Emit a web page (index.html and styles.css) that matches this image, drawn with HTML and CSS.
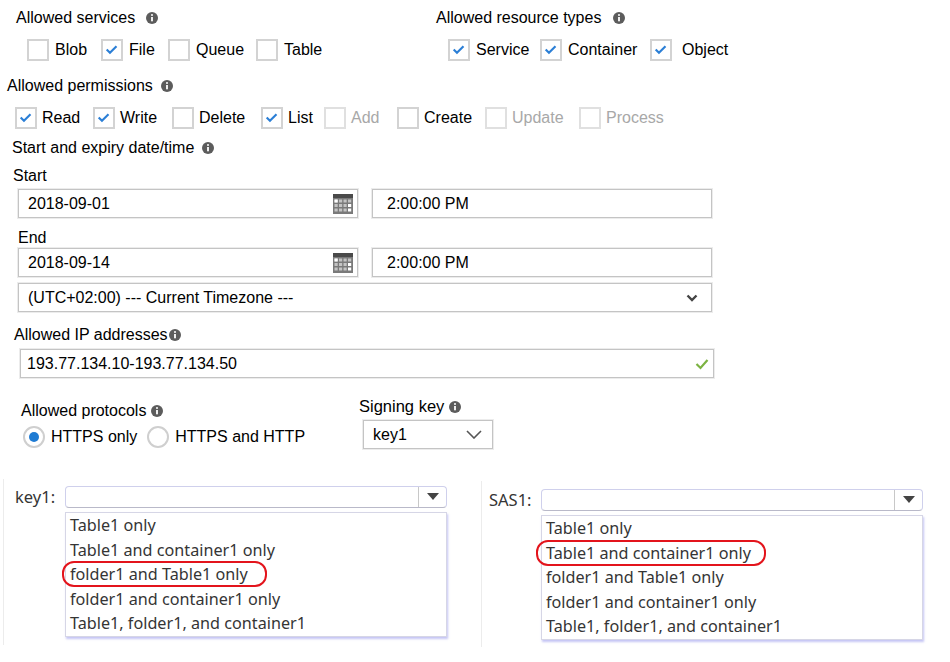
FILE: index.html
```html
<!DOCTYPE html>
<html>
<head>
<meta charset="utf-8">
<link rel="stylesheet" href="styles.css">
</head>
<body>
<div class="page">
  <div class="top">
    <div class="col services">
      <div class="h h16">Allowed services <svg class="info g11" viewBox="0 0 12 12"><circle cx="6" cy="6" r="6" fill="#5c5c5c"/><rect x="5.1" y="5" width="1.8" height="4.3" fill="#fff"/><circle cx="6" cy="3.1" r="1" fill="#fff"/></svg></div>
      <div class="cbrow svc-grid">
        <label class="cb"><span class="box"></span>Blob</label>
        <label class="cb"><span class="box"><svg viewBox="0 0 22 22"><path d="M4.5 10.5 L8.5 14.5 L16.5 6.5" fill="none" stroke="#2b7fd6" stroke-width="2.6"/></svg></span>File</label>
        <label class="cb"><span class="box"></span>Queue</label>
        <label class="cb"><span class="box"></span>Table</label>
      </div>
    </div>
    <div class="col types">
      <div class="h h16">Allowed resource types <svg class="info g12" viewBox="0 0 12 12"><circle cx="6" cy="6" r="6" fill="#5c5c5c"/><rect x="5.1" y="5" width="1.8" height="4.3" fill="#fff"/><circle cx="6" cy="3.1" r="1" fill="#fff"/></svg></div>
      <div class="cbrow typ-grid">
        <label class="cb"><span class="box"><svg viewBox="0 0 22 22"><path d="M4.5 10.5 L8.5 14.5 L16.5 6.5" fill="none" stroke="#2b7fd6" stroke-width="2.6"/></svg></span>Service</label>
        <label class="cb"><span class="box"><svg viewBox="0 0 22 22"><path d="M4.5 10.5 L8.5 14.5 L16.5 6.5" fill="none" stroke="#2b7fd6" stroke-width="2.6"/></svg></span>Container</label>
        <label class="cb obj"><span class="box"><svg viewBox="0 0 22 22"><path d="M4.5 10.5 L8.5 14.5 L16.5 6.5" fill="none" stroke="#2b7fd6" stroke-width="2.6"/></svg></span>Object</label>
      </div>
    </div>
  </div>

  <div class="perm">
    <div class="h h16 perm-h">Allowed permissions <svg class="info g8" viewBox="0 0 12 12"><circle cx="6" cy="6" r="6" fill="#5c5c5c"/><rect x="5.1" y="5" width="1.8" height="4.3" fill="#fff"/><circle cx="6" cy="3.1" r="1" fill="#fff"/></svg></div>
    <div class="cbrow perm-grid">
      <label class="cb"><span class="box"><svg viewBox="0 0 22 22"><path d="M4.5 10.5 L8.5 14.5 L16.5 6.5" fill="none" stroke="#2b7fd6" stroke-width="2.6"/></svg></span>Read</label>
      <label class="cb"><span class="box"><svg viewBox="0 0 22 22"><path d="M4.5 10.5 L8.5 14.5 L16.5 6.5" fill="none" stroke="#2b7fd6" stroke-width="2.6"/></svg></span>Write</label>
      <label class="cb"><span class="box"></span>Delete</label>
      <label class="cb"><span class="box"><svg viewBox="0 0 22 22"><path d="M4.5 10.5 L8.5 14.5 L16.5 6.5" fill="none" stroke="#2b7fd6" stroke-width="2.6"/></svg></span>List</label>
      <label class="cb dis"><span class="box"></span>Add</label>
      <label class="cb"><span class="box"></span>Create</label>
      <label class="cb dis"><span class="box"></span>Update</label>
      <label class="cb dis"><span class="box"></span>Process</label>
    </div>
  </div>

  <div class="h h16 dt-h">Start and expiry date/time <svg class="info g8" viewBox="0 0 12 12"><circle cx="6" cy="6" r="6" fill="#5c5c5c"/><rect x="5.1" y="5" width="1.8" height="4.3" fill="#fff"/><circle cx="6" cy="3.1" r="1" fill="#fff"/></svg></div>
  <div class="h h16 start-l">Start</div>
  <div class="inrow">
    <div class="field date"><span>2018-09-01</span><svg class="cal" viewBox="0 0 20 20"><rect x="0" y="0" width="20" height="20" fill="#7a7a7a"/><rect x="0" y="0" width="20" height="4" fill="#4a4a4a"/><g fill="#c4c4c4"><rect x="1.5" y="5.5" width="3.2" height="3"/><rect x="6" y="5.5" width="3.2" height="3"/><rect x="10.5" y="5.5" width="3.2" height="3"/><rect x="15" y="5.5" width="3.2" height="3"/><rect x="1.5" y="10" width="3.2" height="3"/><rect x="6" y="10" width="3.2" height="3"/><rect x="10.5" y="10" width="3.2" height="3"/><rect x="1.5" y="14.5" width="3.2" height="3"/><rect x="6" y="14.5" width="3.2" height="3"/><rect x="10.5" y="14.5" width="3.2" height="3"/></g><rect x="1.5" y="5.5" width="3.2" height="3" fill="#fff"/><rect x="15" y="10" width="3.2" height="3" fill="#fff"/><rect x="15" y="14.5" width="3.2" height="3" fill="#fff"/></svg></div>
    <div class="field time"><span>2:00:00 PM</span></div>
  </div>
  <div class="h h16 end-l">End</div>
  <div class="inrow end-row">
    <div class="field date"><span>2018-09-14</span><svg class="cal" viewBox="0 0 20 20"><rect x="0" y="0" width="20" height="20" fill="#7a7a7a"/><rect x="0" y="0" width="20" height="4" fill="#4a4a4a"/><g fill="#c4c4c4"><rect x="1.5" y="5.5" width="3.2" height="3"/><rect x="6" y="5.5" width="3.2" height="3"/><rect x="10.5" y="5.5" width="3.2" height="3"/><rect x="15" y="5.5" width="3.2" height="3"/><rect x="1.5" y="10" width="3.2" height="3"/><rect x="6" y="10" width="3.2" height="3"/><rect x="10.5" y="10" width="3.2" height="3"/><rect x="1.5" y="14.5" width="3.2" height="3"/><rect x="6" y="14.5" width="3.2" height="3"/><rect x="10.5" y="14.5" width="3.2" height="3"/></g><rect x="1.5" y="5.5" width="3.2" height="3" fill="#fff"/><rect x="15" y="10" width="3.2" height="3" fill="#fff"/><rect x="15" y="14.5" width="3.2" height="3" fill="#fff"/></svg></div>
    <div class="field time"><span>2:00:00 PM</span></div>
  </div>
  <div class="field tz"><span>(UTC+02:00) --- Current Timezone ---</span><svg class="chev" viewBox="0 0 12 8"><path d="M1.5 1.5 L6 6 L10.5 1.5" fill="none" stroke="#444" stroke-width="2.4"/></svg></div>

  <div class="h h16 ip-h">Allowed IP addresses<svg class="info tight" viewBox="0 0 12 12"><circle cx="6" cy="6" r="6" fill="#5c5c5c"/><rect x="5.1" y="5" width="1.8" height="4.3" fill="#fff"/><circle cx="6" cy="3.1" r="1" fill="#fff"/></svg></div>
  <div class="field ip"><span>193.77.134.10-193.77.134.50</span><svg class="ok" viewBox="0 0 14 12"><path d="M1.5 6 L5.5 10 L12.5 2" fill="none" stroke="#7cb342" stroke-width="2.2"/></svg></div>

  <div class="proto-sign">
    <div class="proto">
      <div class="h h16 proto-h">Allowed protocols <svg class="info" viewBox="0 0 12 12"><circle cx="6" cy="6" r="6" fill="#5c5c5c"/><rect x="5.1" y="5" width="1.8" height="4.3" fill="#fff"/><circle cx="6" cy="3.1" r="1" fill="#fff"/></svg></div>
      <div class="radios">
        <label class="rd"><span class="ring on"></span>HTTPS only</label>
        <label class="rd"><span class="ring"></span>HTTPS and HTTP</label>
      </div>
    </div>
    <div class="sign">
      <div class="h sign-h">Signing key <svg class="info" viewBox="0 0 12 12"><circle cx="6" cy="6" r="6" fill="#5c5c5c"/><rect x="5.1" y="5" width="1.8" height="4.3" fill="#fff"/><circle cx="6" cy="3.1" r="1" fill="#fff"/></svg></div>
      <div class="field keysel"><span>key1</span><svg class="chev2" viewBox="0 0 16 9"><path d="M1 1 L8 8 L15 1" fill="none" stroke="#555" stroke-width="1.6"/></svg></div>
    </div>
  </div>

  <div class="answers">
    <div class="panel left">
      <div class="combo-row">
        <span class="plabel">key1:</span>
        <div class="combo"><span class="combo-val"></span><span class="combo-btn"><svg viewBox="0 0 12 7"><path d="M0 0 L12 0 L6 7 Z" fill="#444"/></svg></span></div>
      </div>
      <div class="list">
        <div class="item">Table1 only</div>
        <div class="item">Table1 and container1 only</div>
        <div class="item"><span class="hl hl-l">folder1 and Table1 only</span></div>
        <div class="item">folder1 and container1 only</div>
        <div class="item">Table1, folder1, and container1</div>
      </div>
    </div>
    <div class="panel right">
      <div class="combo-row">
        <span class="plabel">SAS1:</span>
        <div class="combo"><span class="combo-val"></span><span class="combo-btn"><svg viewBox="0 0 12 7"><path d="M0 0 L12 0 L6 7 Z" fill="#444"/></svg></span></div>
      </div>
      <div class="list">
        <div class="item">Table1 only</div>
        <div class="item"><span class="hl hl-r">Table1 and container1 only</span></div>
        <div class="item">folder1 and Table1 only</div>
        <div class="item">folder1 and container1 only</div>
        <div class="item">Table1, folder1, and container1</div>
      </div>
    </div>
  </div>
</div>
</body>
</html>
```

FILE: styles.css
```css
html, body {
  margin: 0;
  padding: 0;
  background: #fff;
}
body {
  font-family: "Liberation Sans", Arial, sans-serif;
  color: #000;
  width: 950px;
  height: 662px;
  overflow: hidden;
}
.h {
  display: flex;
  align-items: center;
  white-space: nowrap;
}
.h16 { font-size: 16px; }
.info {
  width: 12px;
  height: 12px;
  margin-left: 5px;
  flex: none;
}
.info.g8 { margin-left: 8px; }
.info.g11 { margin-left: 11px; }
.info.g12 { margin-left: 12px; }
.info.tight { margin-left: 1px; }

/* top row */
.top {
  display: flex;
  height: 64px;
}
.services {
  width: 404px;
  padding-left: 16px;
}
.services .h { height: 35px; }
.types {
  padding-left: 16px;
}
.types .h { height: 35px; }
.cbrow {
  display: grid;
  height: 29px;
  align-items: center;
  font-size: 16px;
}
.svc-grid {
  margin-left: 11px;
  grid-template-columns: 74px 67px 88px auto;
}
.typ-grid {
  margin-left: 12px;
  grid-template-columns: 92px 110px auto;
}
.cb {
  display: flex;
  align-items: center;
  gap: 6px;
  white-space: nowrap;
}
.cb.obj { gap: 10px; }
.box {
  box-sizing: border-box;
  width: 22px;
  height: 22px;
  border: 2px solid #d3d3d3;
  background: #fff;
  flex: none;
  display: block;
}
.box svg {
  display: block;
  width: 18px;
  height: 18px;
}
.cb.dis { color: #a8a8a8; }
.cb.dis .box { border-color: #e0e0e0; }

/* permissions */
.perm { margin-top: 8px; }
.perm-h {
  height: 28px;
  padding-left: 7px;
}
.perm-grid {
  height: 28px;
  margin-top: 4px;
  margin-left: 15px;
  grid-template-columns: 78px 79px 89px 63px 73px 88px 94px auto;
}
.perm-grid .cb { gap: 5px; }

/* dates */
.dt-h {
  margin-top: 6px;
  height: 20px;
  padding-left: 12px;
}
.start-l {
  margin-top: 8px;
  height: 20px;
  padding-left: 13px;
}
.end-l {
  margin-top: 10px;
  height: 20px;
  padding-left: 18px;
}
.inrow {
  display: flex;
  gap: 14px;
  margin-top: 3px;
  margin-left: 18px;
}
.inrow.end-row { margin-top: 0; }
.field {
  box-sizing: border-box;
  height: 29px;
  border: 1px solid #c4c4c4;
  box-shadow: 0 0 0 1px #ececec;
  background: #fff;
  display: flex;
  align-items: center;
  font-size: 16px;
  white-space: nowrap;
}
.field span { flex: 1; }
.date {
  width: 340px;
  padding-left: 9px;
  padding-right: 4px;
}
.time {
  width: 340px;
  padding-left: 14px;
}
.cal {
  width: 20px;
  height: 20px;
  flex: none;
}
.tz {
  margin-top: 6px;
  margin-left: 18px;
  width: 694px;
  padding-left: 9px;
  padding-right: 13px;
}
.chev {
  width: 12px;
  height: 8px;
  flex: none;
}
.ip-h {
  margin-top: 13px;
  height: 20px;
  padding-left: 14px;
}
.ip {
  margin-top: 4px;
  margin-left: 20px;
  width: 694px;
  padding-left: 6px;
  padding-right: 4px;
}
.ok {
  width: 14px;
  height: 12px;
  flex: none;
}

/* protocols + signing key */
.proto-sign {
  display: flex;
}
.proto {
  width: 338px;
  padding-left: 21px;
}
.proto-h {
  margin-top: 23px;
  height: 20px;
}
.radios {
  display: flex;
  align-items: center;
  height: 28px;
  margin-top: 2px;
  margin-left: 2px;
  font-size: 16px;
}
.rd {
  display: flex;
  align-items: center;
  gap: 6px;
  white-space: nowrap;
  margin-right: 10px;
}
.ring {
  box-sizing: border-box;
  width: 22px;
  height: 22px;
  border: 2px solid #cfcfcf;
  border-radius: 50%;
  background: #fff;
  display: flex;
  align-items: center;
  justify-content: center;
  flex: none;
}
.ring.on::after {
  content: "";
  width: 10px;
  height: 10px;
  border-radius: 50%;
  background: #1f7bd3;
}
.sign-h {
  margin-top: 18px;
  height: 21px;
  font-size: 16.5px;
}
.keysel {
  margin-top: 3px;
  margin-left: 4px;
  width: 130px;
  padding-left: 9px;
  padding-right: 10px;
}
.chev2 {
  width: 16px;
  height: 9px;
  flex: none;
}

/* answer panels */
.answers {
  display: flex;
  margin-top: 28px;
  font-family: "Noto Sans", "Open Sans", sans-serif;
  color: #353535;
}
.panel {
  box-sizing: border-box;
  border-left: 1px solid #ececec;
  height: 166px;
}
.panel.left {
  margin-left: 3px;
  width: 478px;
  padding-top: 6px;
}
.panel.right {
  margin-top: 2px;
  width: 469px;
  padding-top: 7px;
}
.combo-row {
  display: flex;
  align-items: center;
}
.plabel {
  font-size: 16.5px;
  box-sizing: border-box;
}
.left .plabel { width: 61px; padding-left: 11px; }
.right .plabel { width: 59px; padding-left: 7px; }
.combo {
  box-sizing: border-box;
  width: 382px;
  height: 22px;
  border: 1px solid #cfd0ec;
  border-bottom-color: #b9b9c9;
  border-radius: 4px;
  display: flex;
  background: #fff;
}
.combo-val { flex: 1; }
.combo-btn {
  width: 27px;
  border-left: 1px solid #c8c8c8;
  display: flex;
  align-items: center;
  justify-content: center;
}
.combo-btn svg {
  width: 12px;
  height: 7px;
}
.list {
  box-sizing: border-box;
  width: 382px;
  margin-top: 4px;
  border: 1px solid #d6d6e6;
  box-shadow: 1px 2px 2px rgba(150, 150, 235, 0.55);
  background: #fff;
  padding-left: 4px;
}
.left .list { margin-left: 61px; }
.right .list { margin-left: 59px; }
.item {
  height: 24.5px;
  display: flex;
  align-items: center;
  font-size: 16.2px;
  white-space: nowrap;
}
.hl {
  border: 2px solid #e3141c;
  border-radius: 12px;
  height: 22px;
  display: flex;
  align-items: center;
}
.hl-l {
  padding: 0 17px 0 6px;
  margin-left: -8px;
}
.hl-r {
  padding: 0 13px 0 8px;
  margin-left: -10px;
}
```
